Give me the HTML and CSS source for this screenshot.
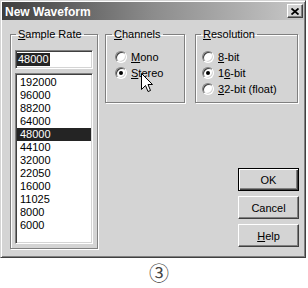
FILE: index.html
```html
<!DOCTYPE html>
<html lang="en">
<head>
    <meta charset="UTF-8">
    <title>New Waveform</title>
    <link rel="stylesheet" href="styles.css">
</head>
<body>
    <div class="dialog">
        <div class="titlebar">
            <span class="title">New Waveform</span>
            <span class="close">
                <svg width="8" height="7" viewBox="0 0 8 7"><path d="M0.5 0.5 L7.5 6.5 M7.5 0.5 L0.5 6.5" stroke="#000" stroke-width="1.8"/></svg>
            </span>
        </div>
        <div class="panel">
            <fieldset class="group rates">
                <legend><u>S</u>ample Rate</legend>
                <div class="textbox"><span class="sel">48000</span></div>
                <ul class="listbox">
                    <li>192000</li>
                    <li>96000</li>
                    <li>88200</li>
                    <li>64000</li>
                    <li class="sel">48000</li>
                    <li>44100</li>
                    <li>32000</li>
                    <li>22050</li>
                    <li>16000</li>
                    <li>11025</li>
                    <li>8000</li>
                    <li>6000</li>
                </ul>
            </fieldset>
            <div class="side">
                <div class="groups">
                    <fieldset class="group channels">
                        <legend><u>C</u>hannels</legend>
                        <div class="option"><span class="radio"></span><span><u>M</u>ono</span></div>
                        <div class="option"><span class="radio on"></span><span><u>S</u>tereo</span></div>
                    </fieldset>
                    <fieldset class="group resolution">
                        <legend><u>R</u>esolution</legend>
                        <div class="option"><span class="radio"></span><span><u>8</u>-bit</span></div>
                        <div class="option"><span class="radio on"></span><span>1<u>6</u>-bit</span></div>
                        <div class="option"><span class="radio"></span><span><u>3</u>2-bit (float)</span></div>
                    </fieldset>
                </div>
                <div class="buttons">
                    <div class="btn default">OK</div>
                    <div class="btn">Cancel</div>
                    <div class="btn"><u>H</u>elp</div>
                </div>
            </div>
        </div>
        <!-- ponteiro do mouse por cima do "Stereo" -->
        <svg class="cursor" width="12" height="20" viewBox="0 0 12 20">
            <path d="M0.5 0.5 L0.5 16.5 L4.5 12.5 L7 18.5 L9.5 17.5 L7 11.5 L11.5 11.5 Z" fill="#fff" stroke="#000" stroke-width="1"/>
        </svg>
    </div>
    <p class="caption">③</p>
</body>
</html>
```

FILE: styles.css
```css
* {
    margin: 0;
    padding: 0;
    box-sizing: border-box;
}
body {
    background-color: #fff;
    font-family: "Liberation Sans", Arial, sans-serif;
    font-size: 11px;
    color: #000;
}
.dialog {
    position: relative;
    width: 306px;
    height: 258px;
    padding: 1px;
    background-color: #d4d4d4;
    border: 1px solid;
    border-color: #d4d4d4 #404040 #404040 #d4d4d4;
    box-shadow: inset 1px 1px #fff, inset -1px -1px #808080;
}
.titlebar {
    display: flex;
    align-items: center;
    justify-content: space-between;
    height: 18px;
    background: linear-gradient(to right, #3e3e3e, #8c8c8c 50%, #c8c8c8);
}
.title {
    padding: 1px 0 0 3px;
    color: #fff;
    font-weight: bold;
    font-size: 12px;
}
.close {
    display: flex;
    align-items: center;
    justify-content: center;
    width: 16px;
    height: 14px;
    margin-right: 1px;
    background-color: #d4d4d4;
    border: 1px solid;
    border-color: #fff #404040 #404040 #fff;
    box-shadow: inset -1px -1px #808080;
}
.panel {
    display: flex;
    padding: 8px 0 0 8px;
}
.group {
    border: 1px solid #808080;
    box-shadow: inset 1px 1px #fff, 1px 1px #fff;
    min-width: 0;
}
.group legend {
    padding: 0 2px;
    line-height: 13px;
}
.rates {
    width: 88px;
    height: 221px;
    padding: 9px 4px 4px 4px;
}
.rates legend {
    margin-left: 1px;
}
.textbox {
    display: flex;
    align-items: center;
    height: 19px;
    padding: 0 1px;
    background-color: #fff;
    border: 1px solid;
    border-color: #808080 #fff #fff #808080;
    box-shadow: inset 1px 1px #404040, inset -1px -1px #d4d4d4;
}
.textbox .sel {
    padding: 0 1px;
    line-height: 13px;
    background-color: #242424;
    color: #fff;
}
.listbox {
    list-style: none;
    height: 171px;
    margin-top: 4px;
    padding: 2px 1px;
    background-color: #fff;
    border: 1px solid;
    border-color: #808080 #fff #fff #808080;
    box-shadow: inset 1px 1px #404040, inset -1px -1px #d4d4d4;
}
.listbox li {
    height: 13px;
    line-height: 13px;
    padding-left: 3px;
}
.listbox li.sel {
    background-color: #242424;
    color: #fff;
}
.side {
    display: flex;
    flex-direction: column;
    margin-left: 7px;
}
.groups {
    display: flex;
    gap: 10px;
}
.channels {
    width: 80px;
    padding: 8px 4px 5px 9px;
}
.channels legend {
    margin-left: -3px;
}
.resolution {
    width: 103px;
    padding: 8px 4px 5px 6px;
}
.resolution legend {
    margin-left: -1px;
}
.option {
    display: flex;
    align-items: center;
    gap: 4px;
    height: 16px;
    white-space: nowrap;
}
.radio {
    display: flex;
    align-items: center;
    justify-content: center;
    width: 12px;
    height: 12px;
    flex: none;
    border-radius: 50%;
    background-color: #fff;
    border: 1px solid;
    border-color: #808080 #fff #fff #808080;
    box-shadow: inset 1px 1px #404040, inset -1px -1px #d4d4d4;
}
.radio.on::after {
    content: "";
    width: 4px;
    height: 4px;
    border-radius: 50%;
    background-color: #000;
}
.buttons {
    display: flex;
    flex-direction: column;
    gap: 5px;
    margin: 65px 0 0 133px;
}
.btn {
    display: flex;
    align-items: center;
    justify-content: center;
    width: 61px;
    height: 23px;
    border: 1px solid;
    border-color: #fff #404040 #404040 #fff;
    box-shadow: inset -1px -1px #808080;
}
.btn.default {
    border: 1px solid #000;
    box-shadow: inset 1px 1px #fff, inset -1px -1px #404040, inset -2px -2px #808080;
}
.cursor {
    position: absolute;
    left: 140px;
    top: 72px;
}
.caption {
    padding-left: 10px;
    text-align: center;
    font-family: "Noto Sans CJK JP", "DejaVu Sans", sans-serif;
    font-size: 20px;
    line-height: 30px;
    color: #444;
}
```
